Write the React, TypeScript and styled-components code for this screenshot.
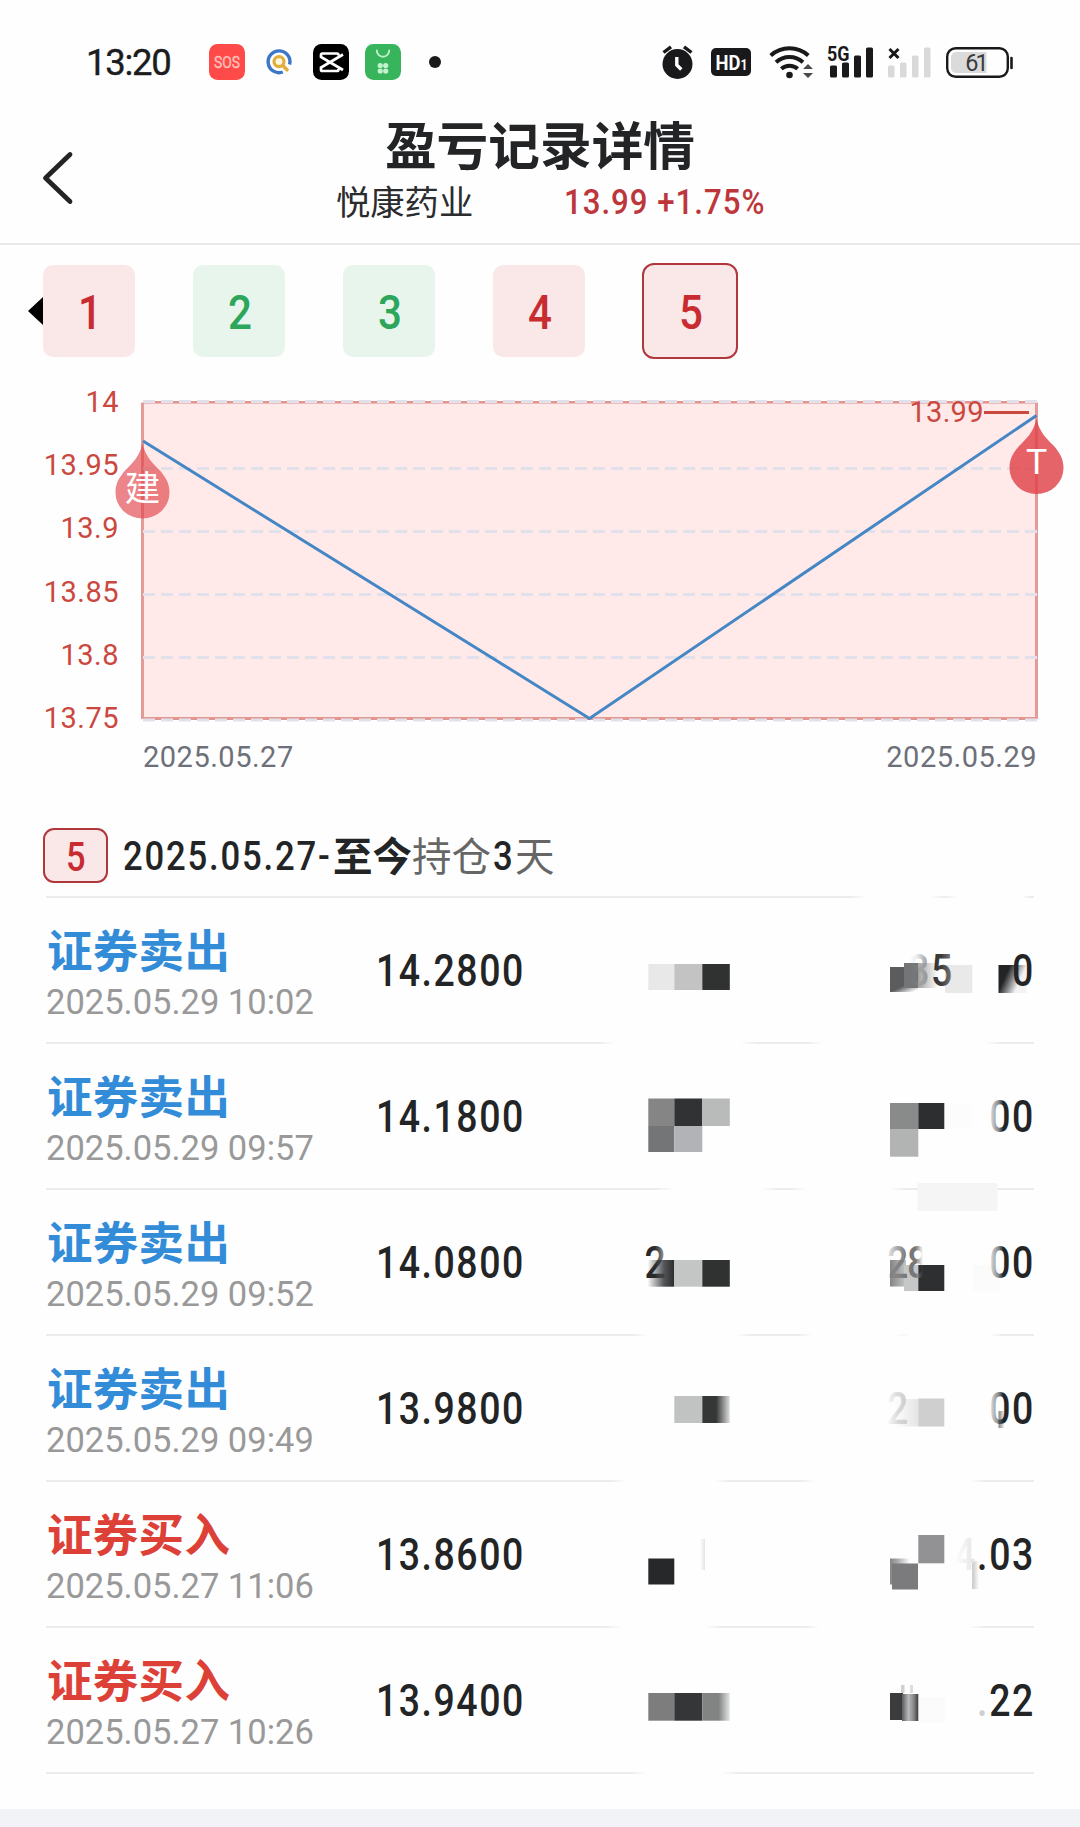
import React from "react";
import styled, { createGlobalStyle } from "styled-components";

const Global = createGlobalStyle`
  *, *::before, *::after { box-sizing: border-box; }
  html, body { margin: 0; padding: 0; background: #fefefe; }
  body { font-family: Roboto, "Noto Sans CJK SC", sans-serif; color: #222426; }
  svg { display: block; flex: none; overflow: visible; }
`;

const Page = styled.main`
  width: 1080px;
  height: 1827px;
  display: flex;
  flex-direction: column;
  background: #fefefe;
  overflow: hidden;
`;

/* Narrow numerals used for every price and index */
const Din = styled.span<{ $size: number; $weight?: number; $scale?: number; $gap?: number }>`
  display: inline-block;
  font-family: Roboto, sans-serif;
  font-size: ${(p) => p.$size}px;
  font-weight: ${(p) => p.$weight ?? 500};
  letter-spacing: ${(p) => p.$gap ?? 1.8}px;
  line-height: 1;
  white-space: nowrap;
  transform: scaleX(${(p) => p.$scale ?? 0.86});
  transform-origin: left center;
`;

/* ---------- status bar ---------- */

const StatusBar = styled.header`
  height: 110px;
  padding: 0 67px 0 86px;
  display: flex;
  justify-content: space-between;
  align-items: flex-start;
`;

const StatusGroup = styled.div`
  display: flex;
  align-items: center;
  height: 124px;
`;

const Clock = styled.span`
  width: 123px;
  padding-top: 2px;
  font-size: 36.5px;
  line-height: 1;
  letter-spacing: -1.3px;
  color: #1b1c1e;
  -webkit-text-stroke: 0.4px #1b1c1e;
`;

const AppIcons = styled.div`
  display: flex;
  gap: 16px;
  margin-right: 28px;
`;

const SystemIcon = styled.svg<{ $before: number }>`
  margin-left: ${(p) => p.$before}px;
`;

const ink = "#19191b";

const SosIcon = () => (
  <svg width="36" height="36" viewBox="0 0 36 36">
    <rect width="36" height="36" rx="8.5" fill="#fe4a48" />
    <text x="18" y="24" textAnchor="middle" fontFamily="Roboto" fontSize="17" textLength="26" lengthAdjust="spacingAndGlyphs" fill="#ffc0bc" stroke="#ffc0bc" strokeWidth="0.4">SOS</text>
  </svg>
);

const SearchIcon = () => (
  <svg width="36" height="36" viewBox="0 0 36 36" fill="none">
    <path d="M21.8 28A10.9 10.9 0 1 1 28.6 20.5" stroke="#3c76c6" strokeWidth="3.4" />
    <circle cx="18" cy="17.6" r="5" stroke="#e3ad3c" strokeWidth="3.2" fill="#fdf6e0" />
    <path d="M22 21.8l4 4" stroke="#e3ad3c" strokeWidth="3.6" strokeLinecap="round" />
  </svg>
);

const CutIcon = () => (
  <svg width="36" height="36" viewBox="0 0 36 36" fill="none">
    <rect width="36" height="36" rx="8.5" fill="#000" />
    <path d="M30 10.5L8 23.5v2.2c0 .8.6 1.3 1.4 1.3H24c.8 0 1.4-.6 1.4-1.3V25M30 26L8 13v-2.2c0-.8.6-1.3 1.4-1.3H24c.8 0 1.4.6 1.4 1.3V11.5" stroke="#fff" strokeWidth="2.7" />
  </svg>
);

const BagIcon = () => (
  <svg width="36" height="36" viewBox="0 0 36 36">
    <rect width="36" height="36" rx="8.5" fill="#38b45c" />
    <path d="M11.8 6.5a6.2 6.2 0 0 0 12.4 0" fill="none" stroke="#b9f0c6" strokeWidth="2" strokeLinecap="round" />
    <g fill="#c3f3cd">
      <circle cx="15.2" cy="21.5" r="2.6" />
      <circle cx="20.7" cy="21.5" r="2.6" />
      <circle cx="15.2" cy="27" r="2.6" />
      <circle cx="20.7" cy="27" r="2.6" />
    </g>
  </svg>
);

const AlarmIcon = () => (
  <SystemIcon $before={0} width="31" height="34" viewBox="0 0 31 34">
    <circle cx="15.5" cy="19" r="15" fill={ink} />
    <path d="M1.5 7.5L9 1.8M29.5 7.5L22 1.8" stroke={ink} strokeWidth="3.4" />
    <path d="M14.8 12v8l4.5 4.5" stroke="#fff" strokeWidth="3.4" fill="none" />
  </SystemIcon>
);

const HdIcon = () => (
  <SystemIcon $before={18} width="40" height="28" viewBox="0 0 40 28">
    <rect width="40" height="28" rx="5" fill={ink} />
    <text x="4.500" y="21.700" fontFamily="Roboto" fontWeight="700" fontSize="21" textLength="32" lengthAdjust="spacingAndGlyphs" fill="#fff">HD<tspan fontSize="14">1</tspan></text>
  </SystemIcon>
);

const WifiIcon = () => (
  <SystemIcon $before={18} width="45" height="34" viewBox="0 0 45 34" fill="none" stroke={ink} strokeWidth="4">
    <path d="M1.7 10.5A28 28 0 0 1 39.3 10.5" />
    <path d="M7 17.3A20 20 0 0 1 34 17.3" />
    <path d="M12.3 23.8A12.5 12.5 0 0 1 28.7 23.8" />
    <circle cx="20.5" cy="30" r="3.3" fill={ink} stroke="none" />
    <path d="M34 24l5-5 5 5zM34 28h10l-5 5z" fill="#4a4a4c" stroke="none" />
  </SystemIcon>
);

const bars = [
  { x: 3, y: 19.5 },
  { x: 15, y: 16.5 },
  { x: 27, y: 9.5 },
  { x: 39, y: 1.5 },
];

const SignalIcon = () => (
  <SystemIcon $before={13} width="47" height="32" viewBox="0 0 47 32">
    {bars.map((b) => (
      <rect key={b.x} x={b.x} y={b.y} width="7" height={31.5 - b.y} rx="1.5" fill={ink} />
    ))}
    <text x="0" y="14.5" fontFamily="Roboto" fontWeight="700" fontSize="20.5" textLength="22.5" lengthAdjust="spacingAndGlyphs" fill={ink} stroke="#fefefe" strokeWidth="2" paintOrder="stroke">5G</text>
  </SystemIcon>
);

const NoSignalIcon = () => (
  <SystemIcon $before={14} width="43" height="32" viewBox="3 0 43 32">
    {bars.map((b) => (
      <rect key={b.x} x={b.x} y={b.y} width="6.5" height={31.5 - b.y} rx="1.5" fill="#d9d9d9" />
    ))}
    <path d="M4.5 3l9 9M13.5 3l-9 9" stroke={ink} strokeWidth="3" />
  </SystemIcon>
);

const BatteryIcon = () => (
  <SystemIcon $before={15} width="67" height="31" viewBox="0 0 67 31">
    <rect x="1.2" y="1.2" width="60.6" height="28.6" rx="8.5" fill="none" stroke={ink} strokeWidth="2.4" />
    <path d="M10 5h30.5v21H10a5 5 0 0 1-5-5V10a5 5 0 0 1 5-5z" fill="#dbdbdb" />
    <path d="M65.5 11v10" stroke={ink} strokeWidth="2.6" strokeLinecap="round" />
    <text x="31" y="24" textAnchor="middle" fontFamily="Roboto" fontSize="23.5" textLength="23.5" fill="#3b3b3d">61</text>
  </SystemIcon>
);

/* ---------- title ---------- */

const TitleBar = styled.section`
  height: 135px;
  padding: 0 43px;
  display: grid;
  grid-template-columns: 40px 1fr 40px;
  border-bottom: 2px solid #e9e9e9;
`;

const BackButton = styled.button`
  padding: 2px 0 0;
  border: 0;
  background: none;
  display: flex;
  align-items: center;
`;

const TitleBlock = styled.div`
  display: flex;
  flex-direction: column;
  align-items: center;
  padding-top: 3px;
`;

const Title = styled.h1`
  margin: 0;
  font-family: "Noto Sans CJK SC", sans-serif;
  font-size: 51.7px;
  font-weight: 700;
  line-height: 60px;
`;

const Quote = styled.div`
  width: 430px;
  margin-left: 22px;
  display: grid;
  grid-template-columns: 228px 202px;
  align-items: center;
  height: 54px;
  color: #bd363b;
`;

const QuoteValue = styled.span`
  display: flex;
  padding-top: 6px;
`;

const StockName = styled.span`
  font-family: "Noto Sans CJK SC", sans-serif;
  font-size: 34.3px;
  line-height: 54px;
  color: #2b2c2e;
`;

/* ---------- tabs ---------- */

const Tabs = styled.nav`
  height: 134px;
  padding: 0 0 3px 28px;
  display: flex;
  align-items: center;
`;

const TabList = styled.div`
  display: flex;
  align-items: center;
  gap: 58px;
`;

const Tab = styled.button<{ $gain: boolean; $active?: boolean }>`
  width: ${(p) => (p.$active ? 96 : 92)}px;
  height: ${(p) => (p.$active ? 96 : 92)}px;
  margin-left: ${(p) => (p.$active ? -1 : 0)}px;
  padding: 4px 0 0 7px;
  border: ${(p) => (p.$active ? "2px solid #b0373c" : "0")};
  border-radius: ${(p) => (p.$active ? 12 : 10)}px;
  background: ${(p) => (p.$gain ? "#fae8e9" : "#e8f5ec")};
  color: ${(p) => (p.$gain ? "#c82c31" : "#2ba65a")};
`;

/* ---------- chart ---------- */

const ChartPanel = styled.section`
  height: 426px;
  padding: 0 43px;
  display: grid;
  grid-template-columns: 76px 24px 1fr;
  grid-template-rows: 359px 1fr;
`;

const AxisY = styled.div`
  padding-top: 7px;
  display: flex;
  flex-direction: column;
  align-items: flex-end;
  color: #cb483f;
`;

const AxisLabel = styled.span`
  flex: none;
  height: 63.2px;
  font-size: 29px;
  letter-spacing: 0.5px;
  line-height: 32px;
`;

const Plot = styled.svg`
  grid-column: 3;
`;

const AxisX = styled.div`
  grid-column: 3;
  display: flex;
  justify-content: space-between;
  padding-top: 2px;
  font-size: 29px;
  letter-spacing: 0.5px;
  line-height: 34px;
  color: #6d7079;
`;

const levels = ["14", "13.95", "13.9", "13.85", "13.8", "13.75"];

const Marker = ({ x, y, label, opacity }: { x: number; y: number; label: string; opacity: number }) => (
  <g transform={`translate(${x} ${y})`}>
    <path d="M0 0C3 14 10 20 17 27C23 34 27 40 27 49.5A27 26 0 0 1-27 49.5C-27 40-23 34-17 27C-10 20-3 14 0 0Z" fill="#e0444a" fillOpacity={opacity} />
    <text x="0" y={label === "T" ? 55 : 57.5} textAnchor="middle" fontFamily='Roboto, "Noto Sans CJK SC"' fontSize="35.5" fill="#fff">{label}</text>
  </g>
);

const Chart = () => (
  <Plot width="894" height="359" viewBox="0 0 894 359">
    <rect x="0" y="24" width="894" height="315" fill="#ffe9e9" />
    <path d="M0 24.5H894" stroke="#eebcb8" strokeWidth="1" />
    <path d="M0 339H894" stroke="#e09a94" strokeWidth="2" />
    <path d="M-0.5 23.5V340M893.5 23.5V340" stroke="#e39b97" strokeWidth="3" />
    <path d="M0 22.5H894M0 341H894M0 89.5H894M0 152.5H894M0 215.5H894M0 278.5H894" stroke="#e2e1eb" strokeWidth="3" strokeDasharray="12 6" />
    <path d="M12 23H894M12 340H894" stroke="#e4948d" strokeWidth="2" strokeDasharray="6 12" />
    <path d="M0 62L446.5 339.5L893.5 36.5" fill="none" stroke="#4587c5" strokeWidth="3" />
    <text x="766.5" y="43" fontFamily="Roboto" fontSize="29" textLength="74" fill="#cb483f">13.99</text>
    <path d="M841 33.5H886" stroke="#cb483f" strokeWidth="3" />
    <Marker x={-0.5} y={64} label="建" opacity={0.65} />
    <Marker x={893.5} y={39.5} label="T" opacity={0.83} />
  </Plot>
);

/* ---------- trades ---------- */

const Summary = styled.section`
  height: 91px;
  padding: 23px 43px 0;
  display: flex;
  align-items: flex-start;
`;

const IndexBadge = styled.span`
  width: 65px;
  height: 55px;
  display: flex;
  align-items: center;
  justify-content: center;
  padding: 5px 0 0 5px;
  border: 2px solid #b0373c;
  border-radius: 11px;
  background: #fae8e9;
  color: #c82c31;
`;

const Period = styled.div`
  height: 51px;
  margin-left: 15px;
  display: flex;
  align-items: center;
  font-family: "Noto Sans CJK SC", sans-serif;
  font-size: 39.5px;
`;

const RangeText = styled.span`
  width: 210px;
  padding-top: 7px;
  display: flex;
`;

const Strong = styled.span`
  font-weight: 700;
`;

const Muted = styled.span`
  color: #666;
`;

const DayCount = styled.span`
  width: 24px;
  padding: 7px 0 0 2px;
  display: flex;
`;

const Trades = styled.section`
  padding: 0 46px;
  height: 913px;
`;

const Divider = styled.div<{ $fill: string }>`
  height: 2px;
  background: ${(p) => p.$fill};
`;

const Row = styled.article`
  height: 144px;
  display: grid;
  grid-template-columns: 330px 264px 240px 154px;
`;

const Deal = styled.div`
  display: flex;
  flex-direction: column;
  padding: 22px 0 0 0;
`;

const DealType = styled.strong<{ $buy: boolean }>`
  padding-left: 1px;
  font-family: "Noto Sans CJK SC", sans-serif;
  font-size: 45.5px;
  font-weight: 700;
  letter-spacing: 0.3px;
  line-height: 56px;
  color: ${(p) => (p.$buy ? "#dc4037" : "#338cd8")};
`;

const DealTime = styled.time`
  padding-top: 3px;
  font-size: 34.5px;
  line-height: 46px;
  color: #999;
`;

const Price = styled.div`
  display: flex;
  align-items: center;
  padding-top: 4px;
`;

/* Stops are [x, opacity] pairs measured from the left edge of the page */
const line = (stops: number[][]) =>
  `linear-gradient(to right, ${stops.map(([x, a]) => `rgba(236,236,237,${a}) ${x - 46}px`).join(", ")})`;

const lines = [
  line([[46, 1], [850, 1], [867, 0], [930, 0], [942, 0.8], [948, 0.8], [958, 0], [1022, 0], [1030, 1]]),
  line([[46, 1], [600, 1], [614, 0], [740, 0], [757, 1], [808, 1], [822, 0], [985, 0], [1000, 1]]),
  line([[46, 1], [655, 1], [675, 0], [760, 0], [778, 1], [790, 1], [808, 0], [890, 0], [905, 1]]),
  line([[46, 1], [632, 1], [648, 0], [735, 0], [752, 1], [798, 1], [812, 0], [893, 0], [902, 0.4], [911, 0], [990, 0], [1002, 1]]),
  line([[46, 1], [612, 1], [626, 0], [715, 0], [730, 1], [800, 1], [815, 0], [970, 0], [985, 1]]),
  line([[46, 1], [605, 1], [622, 0], [705, 0], [722, 1], [805, 1], [820, 0], [968, 0], [985, 1]]),
  line([[46, 1], [630, 1], [648, 0], [720, 0], [740, 1], [1034, 1]]),
];

type Block = { x: number; y: number; w: number; h: number; fill: string };
type Glyph = { x: number; text: string; fill?: string };
type Cell = { blocks: Block[]; glyphs?: Glyph[] };

const block = (x: number, y: number, w: number, h: number, fill: string): Block => ({ x, y, w, h, fill });

/* id, colour, then [offset, opacity] pairs */
const fades: [string, string, number[][]][] = [
  ["slateOut", "#343736", [[0, 1], [0.5, 1], [1, 0.15]]],
  ["greyOut", "#828484", [[0, 1], [0.6, 1], [1, 0.2]]],
  ["smearOut", "#777777", [[0, 0.9], [0.4, 0.6], [1, 0]]],
  ["trailOut", "#8c8c8c", [[0, 0.8], [1, 0]]],
  ["paleOut", "#d0d0d0", [[0, 1], [0.2, 1], [1, 0]]],
  ["darkIn", "#2b2c2e", [[0, 0.05], [0.6, 0.8], [1, 1]]],
  ["paleIn", "#e4e4e4", [[0, 0], [1, 1]]],
  ["eightIn", "#8f8f8f", [[0, 0], [0.4, 0.15], [1, 1]]],
  ["eightOut", "#777777", [[0, 1], [0.4, 1], [0.75, 0]]],
  ["zeroLeft", "#222426", [[0, 0.1], [0.45, 0.55], [0.65, 1]]],
  ["twoRight", "#222426", [[0, 1], [0.5, 0.95], [1, 0.4]]],
  ["twoLeft", "#6d6d6d", [[0, 0.1], [0.5, 0.6], [1, 1]]],
  ["twoPale", "#cccccc", [[0, 0.1], [0.5, 0.7], [1, 1]]],
  ["fiveFade", "#333333", [[0, 1], [0.5, 0.95], [1, 0.6]]],
];

const GradientDefs = styled.svg`
  position: absolute;
`;

const Gradients = () => (
  <GradientDefs width="0" height="0">
    <defs>
      {fades.map(([id, color, stops]) => (
        <linearGradient id={id} key={id}>
          {stops.map(([offset, opacity]) => (
            <stop key={offset} offset={offset} stopColor={color} stopOpacity={opacity} />
          ))}
        </linearGradient>
      ))}
      <linearGradient id="darkOut" x1="0" y1="0" x2="1" y2="0.45">
        <stop offset="0.35" stopColor="#222426" />
        <stop offset="0.85" stopColor="#222426" stopOpacity="0.05" />
      </linearGradient>
      <linearGradient id="silver">
        <stop offset="0" stopColor="#858585" />
        <stop offset="1" stopColor="#c4c4c4" />
      </linearGradient>
      <linearGradient id="cornerOut" x1="0.3" y1="0.3" x2="0.75" y2="1.15">
        <stop offset="0.5" stopColor="#5b5c5e" />
        <stop offset="0.9" stopColor="#5b5c5e" stopOpacity="0" />
      </linearGradient>
      <linearGradient id="shard">
        <stop offset="0" stopColor="#5a5b5d" />
        <stop offset="0.4" stopColor="#b9b9b9" />
        <stop offset="0.7" stopColor="#8a8a8a" />
        <stop offset="1" stopColor="#3c3c3c" />
      </linearGradient>
    </defs>
  </GradientDefs>
);

const Redacted = ({ cell, width }: { cell: Cell; width: number }) => (
  <svg width={width} height="144" viewBox={`0 0 ${width} 144`}>
    {cell.blocks.map((b, i) => (
      <rect key={i} x={b.x} y={b.y} width={b.w} height={b.h} fill={b.fill} />
    ))}
    {(cell.glyphs ?? []).map((g, i) => (
      <text key={i} transform={`translate(${g.x} 88) scale(0.86 1)`} fontFamily="Roboto" fontWeight="500" fontSize="43.5" fill={g.fill ?? "#222426"}>
        {g.text}
      </text>
    ))}
  </svg>
);

const lastDigit = 132;
const priorDigit = 109.3;

const trades: { buy: boolean; time: string; price: string; amount: Cell; total: Cell }[] = [
  {
    buy: false,
    time: "2025.05.29 10:02",
    price: "14.2800",
    amount: { blocks: [block(8.3, 66, 26, 26, "#e8e8e8"), block(34.3, 66, 28, 26, "#c3c3c3"), block(62.3, 66, 27.5, 26, "#2f3231")] },
    total: {
      blocks: [
        block(10, 69, 28.3, 25, "url(#cornerOut)"),
        block(24, 65, 14.3, 25, "#747577"),
        block(38.3, 65, 20, 25, "url(#trailOut)"),
        block(65, 67, 27.3, 28, "#e9e9e9"),
        block(118.5, 67, 28, 28, "url(#darkOut)"),
      ],
      glyphs: [{ x: 28, text: "8", fill: "url(#eightIn)" }, { x: 51, text: "5", fill: "url(#fiveFade)" }, { x: lastDigit, text: "0" }],
    },
  },
  {
    buy: false,
    time: "2025.05.29 09:57",
    price: "14.1800",
    amount: {
      blocks: [
        block(8.3, 54.5, 26, 27.5, "#858585"),
        block(34.3, 54.5, 28, 27.5, "#313234"),
        block(62.3, 54.5, 27.5, 27.5, "#b8bbba"),
        block(8.3, 82, 26, 26, "#737577"),
        block(34.3, 82, 28, 26, "#b1b3b6"),
      ],
    },
    total: {
      blocks: [block(10, 59, 28.3, 26, "#888b89"), block(38.3, 59, 26, 26, "#2d2e30"), block(10, 85, 28.3, 27.7, "#b2b4b3"), block(65, 59, 27, 26, "#fcfcfc")],
      glyphs: [{ x: priorDigit, text: "0", fill: "url(#zeroLeft)" }, { x: lastDigit, text: "0" }],
    },
  },
  {
    buy: false,
    time: "2025.05.29 09:52",
    price: "14.0800",
    amount: {
      blocks: [block(8.3, 70, 26, 26.7, "url(#darkIn)"), block(34.3, 70, 28, 26.7, "#c3c6c5"), block(62.3, 70, 27.5, 26.7, "#2f3231")],
      glyphs: [{ x: 4.5, text: "2", fill: "url(#twoRight)" }],
    },
    total: {
      blocks: [
        block(37.5, -7, 80, 28, "#f5f5f5"),
        block(10, 70, 16, 26.5, "url(#silver)"),
        block(24, 75, 14.3, 26, "#c6c8c8"),
        block(38.3, 75, 26, 26, "#2d2f31"),
        block(93, 75, 27, 26.5, "#fbfbfb"),
      ],
      glyphs: [
        { x: 7, text: "2", fill: "url(#twoLeft)" },
        { x: 27, text: "8", fill: "url(#eightOut)" },
        { x: priorDigit, text: "0", fill: "url(#zeroLeft)" },
        { x: lastDigit, text: "0" },
      ],
    },
  },
  {
    buy: false,
    time: "2025.05.29 09:49",
    price: "13.9800",
    amount: { blocks: [block(34.3, 60, 28, 27, "#c1c2c2"), block(62.3, 60, 27.5, 27, "url(#slateOut)")] },
    total: {
      blocks: [block(14, 63, 24.3, 27.5, "url(#paleIn)"), block(38.3, 62.5, 26, 28, "#cfcfcf"), block(118.5, 75, 6, 17, "url(#smearOut)")],
      glyphs: [{ x: 7, text: "2", fill: "url(#twoPale)" }, { x: priorDigit, text: "0", fill: "url(#zeroLeft)" }, { x: lastDigit, text: "0" }],
    },
  },
  {
    buy: true,
    time: "2025.05.27 11:06",
    price: "13.8600",
    amount: { blocks: [block(8.3, 76.5, 26, 26, "#27282a"), block(60, 57, 5, 31, "url(#paleIn)")] },
    total: {
      blocks: [block(38.3, 53, 26, 28.3, "#929294"), block(10, 76.5, 20, 26, "url(#smearOut)"), block(12, 81.5, 26, 26, "#7b7b7d"), block(92, 79, 7, 28, "url(#paleOut)")],
      glyphs: [{ x: 74, text: "4", fill: "url(#paleIn)" }, { x: 97, text: "." }, { x: priorDigit, text: "0" }, { x: lastDigit, text: "3" }],
    },
  },
  {
    buy: true,
    time: "2025.05.27 10:26",
    price: "13.9400",
    amount: { blocks: [block(8.3, 65, 26, 27.7, "#7d7d7d"), block(34.3, 65, 28, 27.7, "#353637"), block(62.3, 65, 27.5, 27.7, "url(#greyOut)")] },
    total: {
      blocks: [block(10, 65, 13, 27, "#3b3c3e"), block(22, 66, 16.3, 27, "url(#shard)"), block(21, 57, 3.5, 8, "#d0d0d0"), block(30, 57, 3, 8, "#ddd"), block(39, 69, 26, 26, "#fafbfa")],
      glyphs: [{ x: 97, text: ".", fill: "#cfcfcf" }, { x: priorDigit, text: "2" }, { x: lastDigit, text: "2" }],
    },
  },
];

const Footer = styled.footer`
  flex: 1;
  background: #f2f3f6;
`;

export default function App() {
  return (
    <Page>
      <Global />
      <Gradients />
      <StatusBar>
        <StatusGroup>
          <Clock>13:20</Clock>
          <AppIcons>
            <SosIcon />
            <SearchIcon />
            <CutIcon />
            <BagIcon />
          </AppIcons>
          <svg width="12" height="12" viewBox="0 0 12 12">
            <circle cx="6" cy="6" r="6" fill={ink} />
          </svg>
        </StatusGroup>
        <StatusGroup>
          <AlarmIcon />
          <HdIcon />
          <WifiIcon />
          <SignalIcon />
          <NoSignalIcon />
          <BatteryIcon />
        </StatusGroup>
      </StatusBar>

      <TitleBar>
        <BackButton aria-label="返回">
          <svg width="30" height="52" viewBox="0 0 30 52">
            <path d="M27 2.5L2.5 26L27 49.5" fill="none" stroke="#222426" strokeWidth="4.8" strokeLinecap="round" strokeLinejoin="round" />
          </svg>
        </BackButton>
        <TitleBlock>
          <Title>盈亏记录详情</Title>
          <Quote>
            <StockName>悦康药业</StockName>
            <QuoteValue>
              <Din $size={35.5} $scale={0.88} $gap={1.1}>13.99 +1.75%</Din>
            </QuoteValue>
          </Quote>
        </TitleBlock>
      </TitleBar>

      <Tabs>
        <svg width="15" height="28" viewBox="0 0 15 28">
          <path d="M15 0V28L0 14Z" fill="#000" />
        </svg>
        <TabList>
          {[true, false, false, true, true].map((gain, i) => (
            <Tab key={i} $gain={gain} $active={i === 4}>
              <Din $size={49}>{i + 1}</Din>
            </Tab>
          ))}
        </TabList>
      </Tabs>

      <ChartPanel>
        <AxisY>
          {levels.map((l) => (
            <AxisLabel key={l}>{l}</AxisLabel>
          ))}
        </AxisY>
        <Chart />
        <AxisX>
          <span>2025.05.27</span>
          <span>2025.05.29</span>
        </AxisX>
      </ChartPanel>

      <Summary>
        <IndexBadge>
          <Din $size={40}>5</Din>
        </IndexBadge>
        <Period>
          <RangeText>
            <Din $size={40.3} $gap={2.1}>2025.05.27-</Din>
          </RangeText>
          <Strong>至今</Strong>
          <Muted>持仓</Muted>
          <DayCount>
            <Din $size={40.3}>3</Din>
          </DayCount>
          <Muted>天</Muted>
        </Period>
      </Summary>

      <Trades>
        <Divider $fill={lines[0]} />
        {trades.map((t, i) => (
          <React.Fragment key={t.time}>
            <Row>
              <Deal>
                <DealType $buy={t.buy}>{t.buy ? "证券买入" : "证券卖出"}</DealType>
                <DealTime>{t.time}</DealTime>
              </Deal>
              <Price>
                <Din $size={43.5}>{t.price}</Din>
              </Price>
              <Redacted cell={t.amount} width={240} />
              <Redacted cell={t.total} width={154} />
            </Row>
            <Divider $fill={lines[i + 1]} />
          </React.Fragment>
        ))}
      </Trades>
      <Footer />
    </Page>
  );
}
